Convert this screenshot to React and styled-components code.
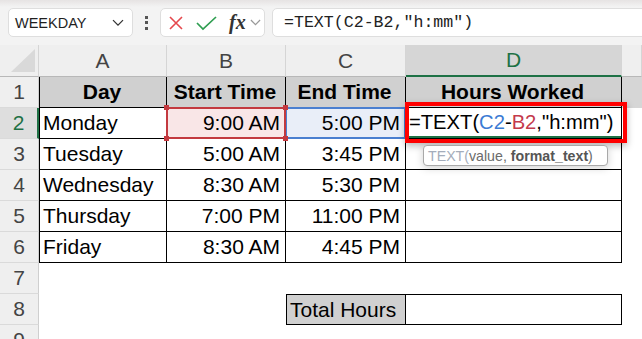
import React from 'react'
import styled, {createGlobalStyle} from 'styled-components'

const Global = createGlobalStyle`
  html, body {
    margin: 0;
    padding: 0;
    background: #fff;
    overflow: hidden;
  }
  body {
    width: 642px;
    height: 339px;
    font-family: "Liberation Sans", Arial, sans-serif;
  }
`

const Page = styled.div`
  width: 642px;
  height: 339px;
  overflow: hidden;
`

// formula bar
const Toolbar = styled.div`
  height: 45px;
  display: flex;
  align-items: center;
  padding-left: 8px;
  background: linear-gradient(#e6e3e3 0, #f3f3f3 7px);
  overflow: hidden;
`

const Box = styled.div`
  box-sizing: border-box;
  height: 29px;
  background: #fff;
  border: 1px solid #dedede;
  border-radius: 5px;
  display: flex;
  align-items: center;
`

const NameBox = styled(Box)`
  width: 125px;
  justify-content: space-between;
  padding: 0 8px 0 6px;
  font-size: 14.5px;
  color: #1f1f1f;
`

const Dots = styled.div`
  width: 27px;
  display: flex;
  flex-direction: column;
  align-items: center;
  gap: 2.5px;

  span {
    width: 3px;
    height: 3px;
    background: #555;
  }
`

const FxBox = styled(Box)`
  width: 105px;
  padding-left: 7px;
  gap: 12px;
`

const Fx = styled.span`
  font-family: "Liberation Serif", "Times New Roman", serif;
  font-style: italic;
  font-weight: bold;
  font-size: 20px;
  color: #333;
  margin-right: -8px;
`

const FormulaInput = styled(Box)`
  flex: 1;
  margin-left: 7px;
  margin-right: -10px;
  border-radius: 5px 0 0 5px;
  padding-left: 11px;
  font-family: "Liberation Mono", "Courier New", monospace;
  font-size: 16.6px;
  color: #222;
`

// sheet
const Sheet = styled.div`
  display: grid;
  grid-template-columns: 39px 128px 119px 120px 216px 1fr;
  grid-template-rows: 32px;
  grid-auto-rows: 31px;
  font-size: 21px;
`

const Corner = styled.div`
  background: #efefef;
  border-right: 1px solid #d5d5d5;
  border-bottom: 1px solid #b8b8b8;
  display: flex;
  align-items: flex-end;
  justify-content: flex-end;
  padding: 0 3px 4px 0;
`

const ColHead = styled.div`
  box-sizing: border-box;
  background: ${p => p.$active ? '#d6d6d6' : '#efefef'};
  color: ${p => p.$active ? '#1e7145' : '#444'};
  border-right: 1px solid #d5d5d5;
  border-bottom: ${p => p.$active ? '2px solid #1e7145' : '1px solid #b8b8b8'};
  display: flex;
  align-items: center;
  justify-content: center;
`

const RowHead = styled.div`
  box-sizing: border-box;
  background: ${p => p.$active ? '#dedede' : '#efefef'};
  color: ${p => p.$active ? '#1e7145' : '#444'};
  border-right: ${p => p.$active ? '2px solid #1e7145' : '1px solid #cfcfcf'};
  border-bottom: 1px solid #dadada;
  display: flex;
  align-items: center;
  justify-content: center;
`

const Cell = styled.div`
  position: relative;
  z-index: ${p => p.$z || 'auto'};
  box-sizing: border-box;
  display: flex;
  align-items: center;
  justify-content: ${p => p.$align === 'right' ? 'flex-end' : p.$align === 'center' ? 'center' : 'flex-start'};
  padding: 0 5px 0 3px;
  white-space: nowrap;
  color: #000;
  font-weight: ${p => p.$bold ? 'bold' : 'normal'};
  background: ${p => p.$fill || '#fff'};
  border-right: ${p => p.$boxed ? '1px solid #000' : '0'};
  border-bottom: ${p => p.$boxed ? '1px solid #000' : '0'};
  border-left: ${p => p.$l ? '1px solid #000' : '0'};
  border-top: ${p => p.$t ? '1px solid #000' : '0'};
`

const RefBorder = styled.div`
  position: absolute;
  left: -1px;
  top: -1px;
  right: -1px;
  bottom: -1px;
  border: 2px solid ${p => p.$color};
  pointer-events: none;
`

const Handle = styled.div`
  position: absolute;
  width: 5px;
  height: 5px;
  background: #c3393f;
  ${p => p.$y}: -3px;
  ${p => p.$x}: -3px;
`

const EditText = styled.div`
  position: absolute;
  inset: 0;
  padding-left: 3px;
  display: flex;
  align-items: center;
  font-size: 20.2px;
  border-bottom: 2px solid #1e7145;
`

const Ref = styled.span`
  color: ${p => p.$color};
`

const Callout = styled.div`
  position: absolute;
  left: -1px;
  top: -6px;
  width: 222px;
  height: 41px;
  box-sizing: border-box;
  border: 4px solid #ff0000;
  box-shadow: 0 3px 7px rgba(0, 0, 0, 0.28);
  pointer-events: none;
`

const Tip = styled.div`
  position: absolute;
  left: 17px;
  top: 37px;
  width: 185px;
  height: 21px;
  box-sizing: border-box;
  background: #fff;
  border: 1px solid #a9a9a9;
  border-radius: 4px;
  box-shadow: 0 2px 8px rgba(0, 0, 0, 0.18);
  padding-left: 4px;
  display: flex;
  align-items: center;
  font-size: 14.2px;
  color: #6b6b6b;

  b {
    color: #555;
    margin-left: 4px;
  }
`

const TipName = styled.span`
  color: #a4adbb;
`

const Chevron = ({size = 12, color = '#333'}) =>
  <svg width={size} height={size * 0.6} viewBox="0 0 12 7" fill="none">
    <path d="M1 1l5 5 5-5" stroke={color} strokeWidth="1.3" />
  </svg>

const CornerMark = () =>
  <svg width="24" height="23" viewBox="0 0 24 23">
    <path d="M24 0V23H0Z" fill="#d9d9d9" />
  </svg>

const columns = ['A', 'B', 'C', 'D', '']

const data = [
  ['Monday', '9:00 AM', '5:00 PM'],
  ['Tuesday', '5:00 AM', '3:45 PM'],
  ['Wednesday', '8:30 AM', '5:30 PM'],
  ['Thursday', '7:00 PM', '11:00 PM'],
  ['Friday', '8:30 AM', '4:45 PM'],
]

const FormulaBar = () =>
  <Toolbar>
    <NameBox>WEEKDAY<Chevron /></NameBox>
    <Dots><span /><span /><span /></Dots>
    <FxBox>
      <svg width="16" height="16" viewBox="0 0 16 16">
        <path d="M2 2l12 12M14 2L2 14" stroke="#e5484d" strokeWidth="1.6" />
      </svg>
      <svg width="21" height="16" viewBox="0 0 21 16">
        <path d="M1 8l6 6L20 2" stroke="#2f9e51" strokeWidth="1.7" fill="none" />
      </svg>
      <Fx>fx</Fx>
      <Chevron size={11} color="#999" />
    </FxBox>
    <FormulaInput>=TEXT(C2-B2,"h:mm")</FormulaInput>
  </Toolbar>

const EditingCell = () =>
  <Cell $boxed $z={5}>
    <EditText>
      =TEXT(<Ref $color="#3b7bd4">C2</Ref>-<Ref $color="#c43a4c">B2</Ref>,"h:mm")
    </EditText>
    <Callout />
    <Tip>
      <TipName>TEXT(</TipName>value,<b>format_text</b>)
    </Tip>
  </Cell>

const App = () =>
  <Page>
    <Global />
    <FormulaBar />
    <Sheet>
      <Corner><CornerMark /></Corner>
      {columns.map(col =>
        <ColHead key={col || 'E'} $active={col === 'D'}>{col}</ColHead>
      )}

      <RowHead>1</RowHead>
      {['Day', 'Start Time', 'End Time', 'Hours Worked'].map((title, i) =>
        <Cell key={title} $boxed $l={i === 0} $bold $align="center" $fill="#d0d0d0">{title}</Cell>
      )}
      <Cell $fill="#d6d6d6" />

      {data.map(([day, start, end], i) => {
        const first = i === 0
        return <React.Fragment key={day}>
          <RowHead $active={first}>{i + 2}</RowHead>
          <Cell $boxed $l>{day}</Cell>
          <Cell $boxed $align="right" $fill={first ? '#f9e6e7' : null} $z={first ? 2 : null}>
            {start}
            {first && <>
              <RefBorder $color="#c3393f" />
              <Handle $x="left" $y="top" />
              <Handle $x="right" $y="top" />
              <Handle $x="left" $y="bottom" />
              <Handle $x="right" $y="bottom" />
            </>}
          </Cell>
          <Cell $boxed $align="right" $fill={first ? '#e9eef8' : null} $z={first ? 1 : null}>
            {end}
            {first && <RefBorder $color="#4a7fd0" />}
          </Cell>
          {first ? <EditingCell /> : <Cell $boxed />}
          <Cell />
        </React.Fragment>
      })}

      <RowHead>7</RowHead>
      <Cell /><Cell /><Cell /><Cell /><Cell />

      <RowHead>8</RowHead>
      <Cell /><Cell />
      <Cell $boxed $l $t $fill="#d0d0d0">Total Hours</Cell>
      <Cell $boxed $t />
      <Cell />

      <RowHead>9</RowHead>
      <Cell /><Cell /><Cell /><Cell /><Cell />
    </Sheet>
  </Page>

export default App
